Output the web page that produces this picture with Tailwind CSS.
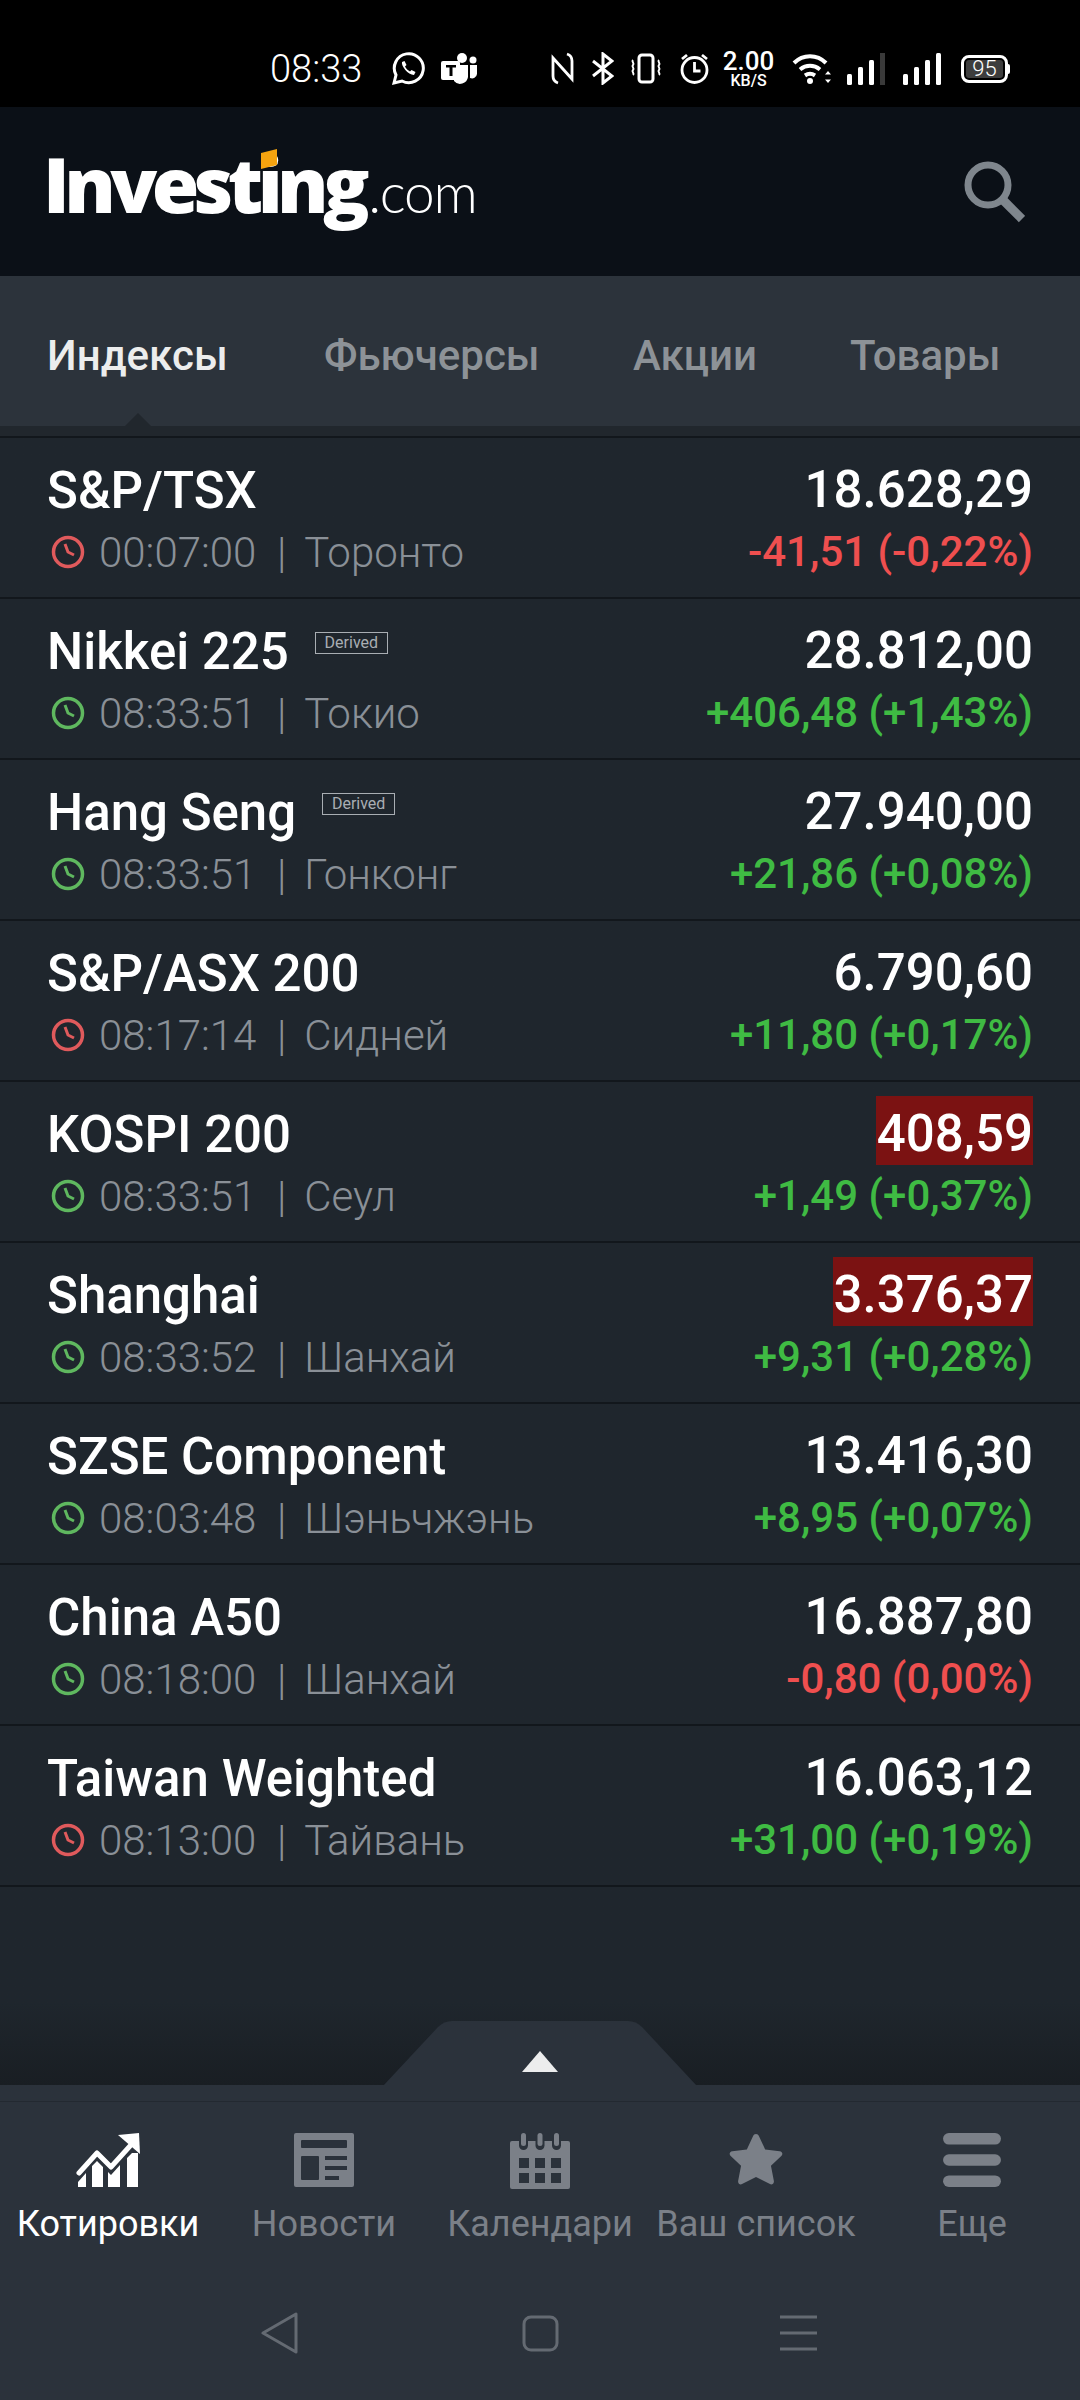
<!DOCTYPE html>
<html><head><meta charset="utf-8">
<script src="https://cdn.jsdelivr.net/npm/@tailwindcss/browser@4"></script>
</head>
<body class="bg-[#1f262d]">
<div class="relative w-[1080px] h-[2400px] flex flex-col overflow-hidden font-['Roboto',sans-serif]">

<!-- status bar -->
<div class="h-[107px] bg-black flex items-center pl-[270px] pt-[30px] text-white shrink-0">
  <span class="w-[93px] text-[38px] font-light leading-none">08:33</span>
  <svg class="ml-[28px] w-[34px] h-[34px]" viewBox="0 0 34 34" fill="none" stroke="#fff" stroke-width="3"><path d="M3 31l2-8a14.500 14.500 0 1 1 6 6z"/><path d="M11 10c-1 4 6 13 12 13l1.500-3-4-2-1.500 1.500c-2-1-4-3-5-5l1.500-1.500-2-4z" fill="#fff" stroke="none"/></svg>
  <svg class="ml-[16px] w-[37px] h-[34px]" viewBox="0 0 37 34" fill="#fff"><circle cx="21" cy="6" r="5"/><circle cx="32" cy="8" r="3.500"/><path d="M13 13h14v12a8 8 0 0 1-14 4z"/><path d="M29 13h7v9a5 5 0 0 1-7 4z"/><rect y="9" width="19" height="19" rx="2"/><path d="M5 13h10v2.500h-3.500V24h-3v-8.500H5z" fill="#000"/></svg>
  <svg class="ml-[73px] w-[23px] h-[33px]" viewBox="0 0 23 33" fill="none" stroke="#fff" stroke-width="2.800"><path d="M2 24V6L21 27V9"/><path d="M2 24c0 3 2 6 5 7M21 9c0-3-2-6-5-7"/></svg>
  <svg class="ml-[17px] w-[23px] h-[33px]" viewBox="0 0 23 33" fill="none" stroke="#fff" stroke-width="3"><path d="M2 9l19 15-9 7V2l9 7L2 24"/></svg>
  <svg class="ml-[16px] w-[32px] h-[33px]" viewBox="0 0 32 33" fill="none" stroke="#fff" stroke-width="3"><rect x="9" y="3" width="14" height="27" rx="3"/><path d="M3 8c-2 2 2 3 0 5s2 3 0 5 2 3 0 5M29 8c-2 2 2 3 0 5s2 3 0 5 2 3 0 5" stroke-width="2"/></svg>
  <svg class="ml-[18px] w-[29px] h-[33px]" viewBox="0 0 29 33" fill="none" stroke="#fff" stroke-width="2.800"><circle cx="14.500" cy="18" r="12.500"/><path d="M14.500 10v9h6"/><path d="M2 7l5-4M27 7l-5-4"/></svg>
  <div class="ml-[15px] w-[49px] flex flex-col items-center text-white font-medium">
    <span class="text-[26px] leading-[25px]">2.00</span>
    <span class="text-[16px] leading-[14px]">KB/S</span>
  </div>
  <svg class="ml-[19px] w-[40px] h-[33px]" viewBox="0 0 40 33" fill="none" stroke="#fff" stroke-width="4"><path d="M2 11c9-9 23-9 32 0M8 17.500c6-5 14-5 20 0M13 23.500c3-2 7-2 10 0"/><circle cx="18" cy="29" r="3" fill="#fff" stroke="none"/><path d="M36 19l-3 3.500h6zM36 31l-3-3.500h6z" fill="#fff" stroke="none"/></svg>
  <svg class="ml-[15px] w-[40px] h-[33px]" viewBox="0 0 40 33"><rect x="0" y="22" width="5" height="11" rx="1.500" fill="#fff"/><rect x="11" y="15" width="5" height="18" rx="1.500" fill="#fff"/><rect x="22" y="8" width="5" height="25" rx="1.500" fill="#fff"/><rect x="33" y="1" width="5" height="32" fill="#3a3a3a"/></svg>
  <svg class="ml-[16px] w-[40px] h-[33px]" viewBox="0 0 40 33" fill="#fff"><rect x="0" y="22" width="5" height="11" rx="1.500"/><rect x="11" y="15" width="5" height="18" rx="1.500"/><rect x="22" y="8" width="5" height="25" rx="1.500"/><rect x="33" y="1" width="5" height="32" rx="1.500"/></svg>
  <div class="ml-[18px] flex items-center">
    <div class="w-[47px] h-[28px] border-[3px] border-white rounded-[8px] p-[2px]"><div class="w-full h-full bg-[#3d3d3d] rounded-[3px] flex items-center justify-center text-[22px] leading-none text-white font-light">95</div></div>
    <div class="w-[2px] h-[10px] bg-white rounded-r"></div>
  </div>
</div>

<!-- header -->
<div class="h-[169px] bg-[#0b1017] flex items-center justify-between pl-[43px] pr-[55px] shrink-0">
  <div class="relative flex items-baseline text-white leading-none -mt-[16px]">
    <span class="font-['Open_Sans',sans-serif] font-extrabold text-[77px] tracking-[-5.6px]">Investing</span>
    <span class="ml-[4px] font-['Lato',sans-serif] font-light text-[55px] tracking-[-1.2px]">.com</span>
    <div class="absolute left-[218px] top-[6px] w-[16px] h-[16px] bg-[#f5a30f] skew-y-[-14deg]"></div>
  </div>
  <svg class="w-[62px] h-[64px]" viewBox="0 0 62 64" fill="none" stroke="#7f868d" stroke-width="7"><circle cx="25" cy="25" r="20"/><path d="M39 39l20 20" stroke-width="9"/></svg>
</div>

<!-- tabs -->
<div class="h-[150px] bg-[#2c333b] flex items-center pt-[8px] text-[42px] font-medium text-[#8d9297] shrink-0">
  <span class="ml-[47px] w-[277px] text-[#eceded]">Индексы</span>
  <span class="w-[309px]">Фьючерсы</span>
  <span class="w-[217px]">Акции</span>
  <span>Товары</span>
</div>
<div class="relative h-[12px] bg-[#21272d] border-b-2 border-[#12171c] shrink-0">
  <svg class="absolute left-[125px] top-[-13px] w-[26px] h-[13px]" viewBox="0 0 26 13"><path d="M13 0l13 13H0z" fill="#21272d"/></svg>
</div>

<!-- list -->
<div class="flex-1 bg-gradient-to-b from-[#1f262d] from-[95%] to-[#191e23]">

  <div class="h-[161px] border-b-2 border-[#12171c] px-[47px] flex justify-between">
    <div><div class="mt-[23px] h-[61px] flex items-start"><span class="text-[51px] font-medium leading-[60px] text-white">S&amp;P/TSX</span></div>
      <div class="h-[60px] flex items-center text-[42px] font-light text-[#8a9097]"><svg class="ml-[3px] w-[36px] h-[36px] mr-[13px]" viewBox="0 0 36 36" fill="none" stroke="#e05a5c" stroke-width="3.500"><circle cx="18" cy="18" r="14.500"/><path d="M15 10l3 8 6 3" stroke-width="3"/></svg><span class="w-[155px]">00:07:00</span><span class="ml-[23px] mr-[18px]">|</span><span>Торонто</span></div></div>
    <div class="flex flex-col items-end"><span class="mt-[14px] h-[69px] text-[51px] font-medium leading-[76px] text-white">18.628,29</span><span class="h-[60px] text-[42px] leading-[62px] font-medium text-[#ef4f4f]">-41,51 (-0,22%)</span></div>
  </div>

  <div class="h-[161px] border-b-2 border-[#12171c] px-[47px] flex justify-between">
    <div><div class="mt-[23px] h-[61px] flex items-start"><span class="text-[51px] font-medium leading-[60px] text-white">Nikkei 225</span><span class="ml-[26px] mt-[10px] w-[73px] h-[22px] border-[1.5px] border-[#a9aeb3] text-[#a9aeb3] text-[16px] leading-[19px] text-center">Derived</span></div>
      <div class="h-[60px] flex items-center text-[42px] font-light text-[#8a9097]"><svg class="ml-[3px] w-[36px] h-[36px] mr-[13px]" viewBox="0 0 36 36" fill="none" stroke="#5fb85f" stroke-width="3.500"><circle cx="18" cy="18" r="14.500"/><path d="M15 10l3 8 6 3" stroke-width="3"/></svg><span class="w-[155px]">08:33:51</span><span class="ml-[23px] mr-[18px]">|</span><span>Токио</span></div></div>
    <div class="flex flex-col items-end"><span class="mt-[14px] h-[69px] text-[51px] font-medium leading-[76px] text-white">28.812,00</span><span class="h-[60px] text-[42px] leading-[62px] font-medium text-[#3fbb43]">+406,48 (+1,43%)</span></div>
  </div>

  <div class="h-[161px] border-b-2 border-[#12171c] px-[47px] flex justify-between">
    <div><div class="mt-[23px] h-[61px] flex items-start"><span class="text-[51px] font-medium leading-[60px] text-white">Hang Seng</span><span class="ml-[26px] mt-[10px] w-[73px] h-[22px] border-[1.5px] border-[#a9aeb3] text-[#a9aeb3] text-[16px] leading-[19px] text-center">Derived</span></div>
      <div class="h-[60px] flex items-center text-[42px] font-light text-[#8a9097]"><svg class="ml-[3px] w-[36px] h-[36px] mr-[13px]" viewBox="0 0 36 36" fill="none" stroke="#5fb85f" stroke-width="3.500"><circle cx="18" cy="18" r="14.500"/><path d="M15 10l3 8 6 3" stroke-width="3"/></svg><span class="w-[155px]">08:33:51</span><span class="ml-[23px] mr-[18px]">|</span><span>Гонконг</span></div></div>
    <div class="flex flex-col items-end"><span class="mt-[14px] h-[69px] text-[51px] font-medium leading-[76px] text-white">27.940,00</span><span class="h-[60px] text-[42px] leading-[62px] font-medium text-[#3fbb43]">+21,86 (+0,08%)</span></div>
  </div>

  <div class="h-[161px] border-b-2 border-[#12171c] px-[47px] flex justify-between">
    <div><div class="mt-[23px] h-[61px] flex items-start"><span class="text-[51px] font-medium leading-[60px] text-white">S&amp;P/ASX 200</span></div>
      <div class="h-[60px] flex items-center text-[42px] font-light text-[#8a9097]"><svg class="ml-[3px] w-[36px] h-[36px] mr-[13px]" viewBox="0 0 36 36" fill="none" stroke="#e05a5c" stroke-width="3.500"><circle cx="18" cy="18" r="14.500"/><path d="M15 10l3 8 6 3" stroke-width="3"/></svg><span class="w-[155px]">08:17:14</span><span class="ml-[23px] mr-[18px]">|</span><span>Сидней</span></div></div>
    <div class="flex flex-col items-end"><span class="mt-[14px] h-[69px] text-[51px] font-medium leading-[76px] text-white">6.790,60</span><span class="h-[60px] text-[42px] leading-[62px] font-medium text-[#3fbb43]">+11,80 (+0,17%)</span></div>
  </div>

  <div class="h-[161px] border-b-2 border-[#12171c] px-[47px] flex justify-between">
    <div><div class="mt-[23px] h-[61px] flex items-start"><span class="text-[51px] font-medium leading-[60px] text-white">KOSPI 200</span></div>
      <div class="h-[60px] flex items-center text-[42px] font-light text-[#8a9097]"><svg class="ml-[3px] w-[36px] h-[36px] mr-[13px]" viewBox="0 0 36 36" fill="none" stroke="#5fb85f" stroke-width="3.500"><circle cx="18" cy="18" r="14.500"/><path d="M15 10l3 8 6 3" stroke-width="3"/></svg><span class="w-[155px]">08:33:51</span><span class="ml-[23px] mr-[18px]">|</span><span>Сеул</span></div></div>
    <div class="flex flex-col items-end"><span class="mt-[14px] h-[69px] text-[51px] font-medium leading-[76px] text-white bg-[#7b1212] pl-[1px]">408,59</span><span class="h-[60px] text-[42px] leading-[62px] font-medium text-[#3fbb43]">+1,49 (+0,37%)</span></div>
  </div>

  <div class="h-[161px] border-b-2 border-[#12171c] px-[47px] flex justify-between">
    <div><div class="mt-[23px] h-[61px] flex items-start"><span class="text-[51px] font-medium leading-[60px] text-white">Shanghai</span></div>
      <div class="h-[60px] flex items-center text-[42px] font-light text-[#8a9097]"><svg class="ml-[3px] w-[36px] h-[36px] mr-[13px]" viewBox="0 0 36 36" fill="none" stroke="#5fb85f" stroke-width="3.500"><circle cx="18" cy="18" r="14.500"/><path d="M15 10l3 8 6 3" stroke-width="3"/></svg><span class="w-[155px]">08:33:52</span><span class="ml-[23px] mr-[18px]">|</span><span>Шанхай</span></div></div>
    <div class="flex flex-col items-end"><span class="mt-[14px] h-[69px] text-[51px] font-medium leading-[76px] text-white bg-[#7b1212] pl-[1px]">3.376,37</span><span class="h-[60px] text-[42px] leading-[62px] font-medium text-[#3fbb43]">+9,31 (+0,28%)</span></div>
  </div>

  <div class="h-[161px] border-b-2 border-[#12171c] px-[47px] flex justify-between">
    <div><div class="mt-[23px] h-[61px] flex items-start"><span class="text-[51px] font-medium leading-[60px] text-white">SZSE Component</span></div>
      <div class="h-[60px] flex items-center text-[42px] font-light text-[#8a9097]"><svg class="ml-[3px] w-[36px] h-[36px] mr-[13px]" viewBox="0 0 36 36" fill="none" stroke="#5fb85f" stroke-width="3.500"><circle cx="18" cy="18" r="14.500"/><path d="M15 10l3 8 6 3" stroke-width="3"/></svg><span class="w-[155px]">08:03:48</span><span class="ml-[23px] mr-[18px]">|</span><span>Шэньчжэнь</span></div></div>
    <div class="flex flex-col items-end"><span class="mt-[14px] h-[69px] text-[51px] font-medium leading-[76px] text-white">13.416,30</span><span class="h-[60px] text-[42px] leading-[62px] font-medium text-[#3fbb43]">+8,95 (+0,07%)</span></div>
  </div>

  <div class="h-[161px] border-b-2 border-[#12171c] px-[47px] flex justify-between">
    <div><div class="mt-[23px] h-[61px] flex items-start"><span class="text-[51px] font-medium leading-[60px] text-white">China A50</span></div>
      <div class="h-[60px] flex items-center text-[42px] font-light text-[#8a9097]"><svg class="ml-[3px] w-[36px] h-[36px] mr-[13px]" viewBox="0 0 36 36" fill="none" stroke="#5fb85f" stroke-width="3.500"><circle cx="18" cy="18" r="14.500"/><path d="M15 10l3 8 6 3" stroke-width="3"/></svg><span class="w-[155px]">08:18:00</span><span class="ml-[23px] mr-[18px]">|</span><span>Шанхай</span></div></div>
    <div class="flex flex-col items-end"><span class="mt-[14px] h-[69px] text-[51px] font-medium leading-[76px] text-white">16.887,80</span><span class="h-[60px] text-[42px] leading-[62px] font-medium text-[#ef4f4f]">-0,80 (0,00%)</span></div>
  </div>

  <div class="h-[161px] border-b-2 border-[#12171c] px-[47px] flex justify-between">
    <div><div class="mt-[23px] h-[61px] flex items-start"><span class="text-[51px] font-medium leading-[60px] text-white">Taiwan Weighted</span></div>
      <div class="h-[60px] flex items-center text-[42px] font-light text-[#8a9097]"><svg class="ml-[3px] w-[36px] h-[36px] mr-[13px]" viewBox="0 0 36 36" fill="none" stroke="#e05a5c" stroke-width="3.500"><circle cx="18" cy="18" r="14.500"/><path d="M15 10l3 8 6 3" stroke-width="3"/></svg><span class="w-[155px]">08:13:00</span><span class="ml-[23px] mr-[18px]">|</span><span>Тайвань</span></div></div>
    <div class="flex flex-col items-end"><span class="mt-[14px] h-[69px] text-[51px] font-medium leading-[76px] text-white">16.063,12</span><span class="h-[60px] text-[42px] leading-[62px] font-medium text-[#3fbb43]">+31,00 (+0,19%)</span></div>
  </div>
</div>

<!-- bottom -->
<div class="relative h-[315px] bg-[#2b323b] shrink-0">
  <svg class="absolute left-[383px] top-[-64px] w-[314px] h-[65px]" viewBox="0 0 314 65"><path d="M0 65L55 6Q61 0 69 0H245Q253 0 259 6L314 65z" fill="#2b323b"/><path d="M157 30l18 21h-36z" fill="#eceded"/></svg>
  <div class="h-[17px] border-b border-[#232931]"></div>
  <div class="grid grid-cols-5 h-[188px] text-[36px] text-[#7b8088] leading-none">
    <div class="flex flex-col items-center pt-[31px] text-white">
      <svg class="w-[64px] h-[54px]" viewBox="0 0 64 54" fill="#fff"><path d="M3 40L21 20L35 34L54 13" fill="none" stroke="#fff" stroke-width="5" stroke-linecap="round" stroke-linejoin="round"/><path d="M42 2L63 0L64 21z"/><path d="M2 54V49L10 40V54zM16 54V33L21 28L27 34V54zM32 54V39L35 42L44 32V54zM51 54V25L56 20H62V54z"/></svg>
      <span class="mt-[19px] w-max">Котировки</span>
    </div>
    <div class="flex flex-col items-center pt-[31px]">
      <svg class="w-[60px] h-[54px]" viewBox="0 0 60 54"><rect width="60" height="54" rx="2" fill="#7b8088"/><rect x="7" y="7" width="46" height="8" rx="1" fill="#2b323b"/><rect x="7" y="23" width="18" height="24" rx="1" fill="#2b323b"/><rect x="31" y="23" width="22" height="4" fill="#2b323b"/><rect x="31" y="33" width="22" height="4" fill="#2b323b"/><rect x="31" y="43" width="14" height="4" fill="#2b323b"/></svg>
      <span class="mt-[19px] w-max">Новости</span>
    </div>
    <div class="flex flex-col items-center pt-[31px]">
      <svg class="w-[60px] h-[54px] overflow-visible" viewBox="0 0 60 54"><path d="M2 8h56q2 0 2 2v44q0 2-2 2H2q-2 0-2-2V10q0-2 2-2z" fill="#7b8088"/><g fill="#2b323b"><rect x="9" y="1" width="9" height="16" rx="4.500"/><rect x="25.500" y="1" width="9" height="16" rx="4.500"/><rect x="42" y="1" width="9" height="16" rx="4.500"/><rect x="9" y="25" width="10" height="10"/><rect x="25" y="25" width="10" height="10"/><rect x="41" y="25" width="10" height="10"/><rect x="9" y="40" width="10" height="10"/><rect x="25" y="40" width="10" height="10"/><rect x="41" y="40" width="10" height="10"/></g><g fill="#7b8088"><rect x="11" y="0" width="5" height="13" rx="2.500"/><rect x="27.500" y="0" width="5" height="13" rx="2.500"/><rect x="44" y="0" width="5" height="13" rx="2.500"/></g></svg>
      <span class="mt-[19px] w-max">Календари</span>
    </div>
    <div class="flex flex-col items-center pt-[31px]">
      <svg class="w-[56px] h-[54px]" viewBox="0 0 56 56" fill="#7b8088"><path d="M28 1c1.500 0 2.500 1 3 2l6.500 14 15 2c3 .5 3.500 3 2 4.500L43.500 34l3 15.500c.5 3-2 4.500-4 3.500L28 45.500 13.500 53c-2 1-4.500-.5-4-3.500l3-15.500L1.500 23.500c-1.500-1.500-1-4 2-4.500l15-2L25 3c.5-1 1.500-2 3-2z"/></svg>
      <span class="mt-[19px] w-max">Ваш список</span>
    </div>
    <div class="flex flex-col items-center pt-[31px]">
      <svg class="w-[60px] h-[54px]" viewBox="0 0 60 56" fill="#7b8088"><rect width="60" height="12" rx="6"/><rect y="22" width="60" height="12" rx="6"/><rect y="44" width="60" height="12" rx="6"/></svg>
      <span class="mt-[19px] w-max">Еще</span>
    </div>
  </div>
  <div class="flex items-center h-[60px] mt-[13px] pl-[261px]">
    <svg class="w-[37px] h-[42px]" viewBox="0 0 37 42" fill="none" stroke="#646a72" stroke-width="3" stroke-linejoin="round"><path d="M35 2v38L2 21z"/></svg>
    <svg class="ml-[224px] w-[37px] h-[37px]" viewBox="0 0 37 37" fill="none" stroke="#646a72" stroke-width="3"><rect x="2" y="2" width="33" height="33" rx="7"/></svg>
    <svg class="ml-[221px] w-[37px] h-[36px]" viewBox="0 0 37 36" fill="none" stroke="#646a72" stroke-width="3"><path d="M0 2h37M0 18h37M0 34h37"/></svg>
  </div>
</div>

</div>
</body></html>
